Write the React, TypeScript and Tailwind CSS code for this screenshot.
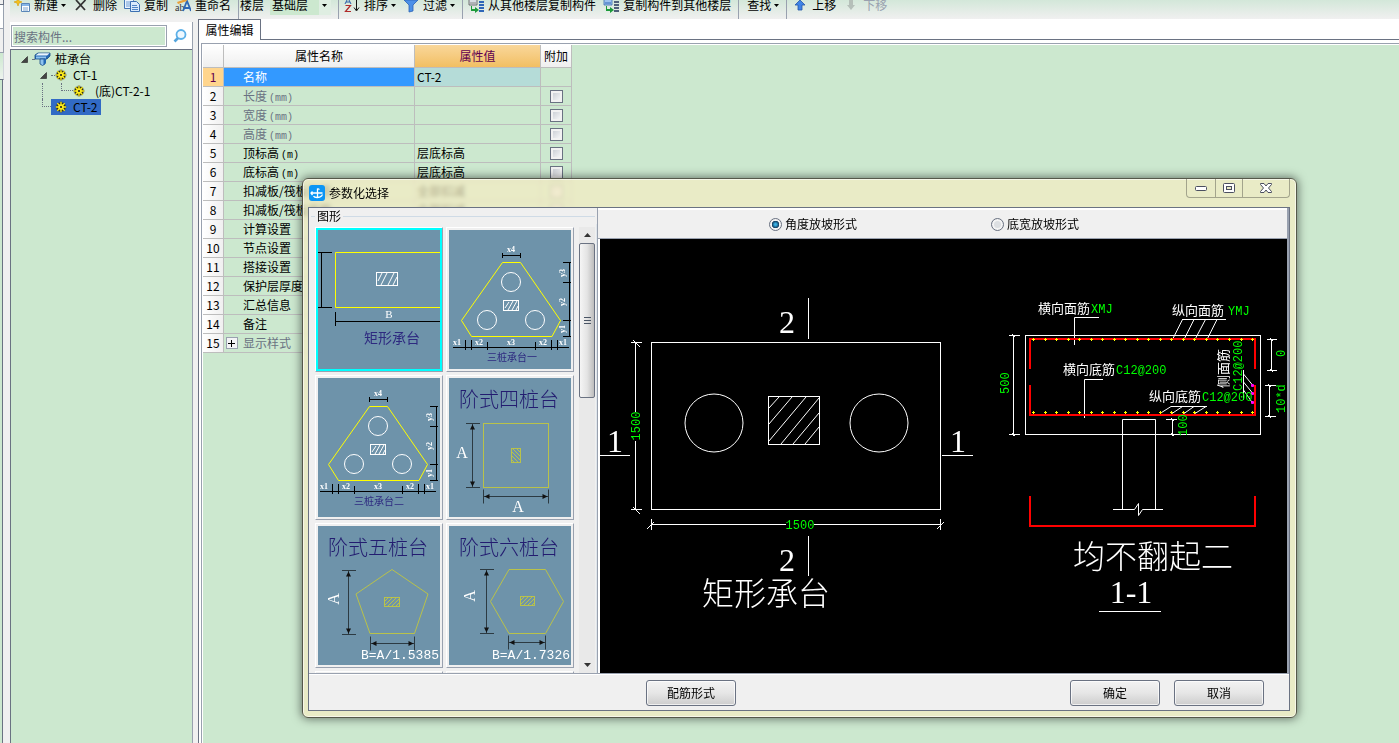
import type { ReactNode } from "react";

const UI_FONT = "font-['Noto_Sans_CJK_SC','Liberation_Sans',sans-serif]";
const MONO = "'Liberation Mono','Noto Sans CJK SC',monospace";
const SERIF = "'Liberation Serif','Noto Sans CJK SC',serif";
const CJK = "'Noto Sans CJK SC',sans-serif";

type Row = {
    name: string;
    unit?: string;
    value?: string;
    muted?: boolean;
    check?: boolean;
    expandable?: boolean;
};

const rows: Row[] = [
    { name: "名称", value: "CT-2" },
    { name: "长度", unit: "(mm)", muted: true, check: true },
    { name: "宽度", unit: "(mm)", muted: true, check: true },
    { name: "高度", unit: "(mm)", muted: true, check: true },
    { name: "顶标高", unit: "(m)", value: "层底标高", check: true },
    { name: "底标高", unit: "(m)", value: "层底标高", check: true },
    { name: "扣减板/筏板面筋", value: "全部扣减", check: true },
    { name: "扣减板/筏板底筋", value: "全部扣减", check: true },
    { name: "计算设置" },
    { name: "节点设置" },
    { name: "搭接设置" },
    { name: "保护层厚度" },
    { name: "汇总信息" },
    { name: "备注" },
    { name: "显示样式", muted: true, expandable: true },
];

/* ---------- Toolbar ---------- */

function Caret() {
    return (
        <svg width="5" height="3" viewBox="0 0 5 3" className="-ml-px shrink-0">
            <path d="M0 0h5L2.5 3z" fill="#000" />
        </svg>
    );
}

function ToolButton({ icon, label, caret, disabled }: { icon?: ReactNode; label: string; caret?: boolean; disabled?: boolean }) {
    return (
        <button type="button" disabled={disabled} className="flex h-7 shrink-0 items-center gap-1 whitespace-nowrap disabled:text-gray-400">
            {icon && (
                <svg width="16" height="16" viewBox="0 0 16 16" className="shrink-0">
                    {icon}
                </svg>
            )}
            {label}
            {caret && <Caret />}
        </button>
    );
}

const newIcon = (
    <>
        <path d="M4 1l1 3 3 1-3 1-1 3-1-3-3-1 3-1z" fill="#f5c21b" stroke="#d79a00" strokeWidth=".6" />
        <path d="M7.500 6.500h8v8h-8z" fill="#fff" stroke="#5a86b8" />
        <path d="M8 7h7v2H8z" fill="#86b6e8" />
        <path d="M9 11h5M9 13h5" stroke="#7ba3cf" />
    </>
);

const deleteIcon = <path d="M3 3l9 10M12.500 3L3 13" stroke="#333" strokeWidth="1.8" fill="none" />;

const copyIcon = (
    <>
        <path d="M.5 1.500h7l2 2v8h-9z" fill="#eaf3fd" stroke="#4477b5" />
        <path d="M2 5h5M2 7h4M2 9h4" stroke="#6f9ed4" />
        <path d="M6.500 4.500h6l3 3v7h-9z" fill="#d9eafb" stroke="#3c70b2" />
        <path d="M8 8.500h5M8 10.500h6M8 12.500h6" stroke="#4f84c4" />
    </>
);

const renameIcon = (
    <>
        <text x="0" y="14" fontSize="10" fontFamily={SERIF} fill="#333">ab</text>
        <path d="M8 14l4-10 4 10M9.500 11h5" stroke="#2f68b5" strokeWidth="1.8" fill="none" />
        <path d="M2 5l9-3 1 2-9 3z" fill="#e9a13b" />
    </>
);

const sortIcon = (
    <>
        <path d="M1 7l3-6 3 6M2 5h4" stroke="#2a5fa8" fill="none" />
        <path d="M1.500 8.500h5l-5 6h5.500" stroke="#b02a2a" strokeWidth="1.200" fill="none" />
        <path d="M12.500 1v12M10 10.500l2.500 3.500 2.500-3.500" stroke="#111" fill="none" />
    </>
);

const filterIcon = <path d="M1 3h14l-5 5v6l-4 1V8z" fill="#4a90e8" stroke="#2b62b5" strokeWidth=".8" />;

const floorIcon = (
    <>
        <path d="M1 2h8v6H1z" fill="#d8dde3" stroke="#555" strokeWidth=".8" />
        <path d="M2 6h6" stroke="#888" />
        <path d="M4 9v3h3v-2l4 3-4 3v-2H3V9z" fill="#1c9a3a" />
        <path d="M11 2h5M11 5h5M11 8h5M11 11h5M11 14h5" stroke="#2f66b8" strokeWidth="1.800" />
    </>
);

const floorToIcon = (
    <>
        <path d="M1 2h8v6H1z" fill="#9cc1ee" stroke="#3b6cae" strokeWidth=".8" />
        <path d="M2 6h6" stroke="#2f66b8" />
        <path d="M4 9v3h3v-2l4 3-4 3v-2H3V9z" fill="#1c9a3a" />
        <path d="M11 2h5M11 5h5M11 8h5M11 11h5M11 14h5" stroke="#50617a" strokeWidth="1.800" />
    </>
);

const upIcon = <path d="M8 3l5 5h-3v5H6V8H3z" fill="#3f83e6" stroke="#2356a8" strokeWidth=".8" />;
const downIcon = <path d="M8 13l4-5h-2V3H6v5H4z" fill="#b5bfb9" />;

function ToolGroup({ children, wide }: { children: ReactNode; wide?: boolean }) {
    return <div className={`flex h-7 items-center gap-[7px] border-l border-gray-400 ${wide ? "pl-2" : "pl-[5px]"}`}>{children}</div>;
}

function Toolbar() {
    return (
        <div className="flex h-[19px] shrink-0 items-end gap-[7px] overflow-hidden bg-linear-to-b from-[#d3e7d9] to-[#f0f0f0] pl-1">
            <ToolButton icon={newIcon} label="新建" caret />
            <ToolButton icon={deleteIcon} label="删除" />
            <ToolButton icon={copyIcon} label="复制" />
            <ToolButton icon={renameIcon} label="重命名" />
            <div className="flex h-7 shrink-0 items-center gap-[6px] border-l border-gray-400 pl-px">
                <label htmlFor="floor">楼层</label>
                <div className="relative h-5 w-[61px] bg-[#cce8cf]">
                    <select id="floor" className="h-5 w-full appearance-none pl-[2px] outline-none">
                        <option>基础层</option>
                    </select>
                    <span className="pointer-events-none absolute inset-y-0 right-0 flex w-3 items-center justify-center bg-[#dfeee2]">
                        <Caret />
                    </span>
                </div>
            </div>
            <ToolGroup>
                <ToolButton icon={sortIcon} label="排序" caret />
                <ToolButton icon={filterIcon} label="过滤" caret />
            </ToolGroup>
            <ToolGroup>
                <ToolButton icon={floorIcon} label="从其他楼层复制构件" />
                <ToolButton icon={floorToIcon} label="复制构件到其他楼层" />
            </ToolGroup>
            <ToolGroup wide>
                <ToolButton label="查找" caret />
            </ToolGroup>
            <ToolGroup>
                <ToolButton icon={upIcon} label="上移" />
                <ToolButton icon={downIcon} label="下移" disabled />
            </ToolGroup>
        </div>
    );
}

/* ---------- Component tree ---------- */

function Gear() {
    const spokes = "M6 .8v10.400M.8 6h10.400M2.300 2.300l7.400 7.400M9.700 2.300L2.300 9.700";
    return (
        <svg width="12" height="12" viewBox="0 0 12 12" className="shrink-0">
            <circle cx="6" cy="6" r="4.600" fill="#4a4200" />
            <path d={spokes} stroke="#222" strokeWidth="2.400" />
            <path d={spokes} stroke="#ffee1a" strokeWidth="1.400" />
            <circle cx="6" cy="6" r="2.800" fill="#ffee1a" />
            <circle cx="6" cy="6" r="1.100" fill="#222" />
        </svg>
    );
}

function Expander() {
    return (
        <svg width="7" height="7" viewBox="0 0 7 7" className="shrink-0">
            <path d="M6.500 .5v6h-6z" fill="#444" stroke="#222" strokeWidth=".6" />
        </svg>
    );
}

function TreePanel() {
    return (
        <aside className="flex w-[183px] shrink-0 flex-col border-r border-gray-400 bg-white">
            <div className="flex h-[27px] items-center pl-px pt-px">
                <input
                    type="text"
                    aria-label="搜索构件"
                    placeholder="搜索构件..."
                    className="h-[22px] w-[156px] border border-gray-400 bg-[#cce8cf] px-[2px] outline-none ring-1 ring-inset ring-white placeholder:text-gray-500"
                />
                <button type="button" aria-label="搜索" className="ml-[6px]">
                    <svg width="14" height="14" viewBox="0 0 14 14">
                        <circle cx="8" cy="5.500" r="4.500" fill="#eef8ff" stroke="#5cb0e8" strokeWidth="1.800" />
                        <path d="M5 9l-3.500 3.500" stroke="#53a4dc" strokeWidth="2.600" />
                    </svg>
                </button>
            </div>
            <ul className="flex-1 border-l border-t border-gray-500 bg-[#cce8cf] pt-px leading-4">
                <li className="flex h-4 items-center pl-[10px]">
                    <Expander />
                    <span className="ml-1 w-[2px] border-t border-dotted border-gray-500" />
                    <svg width="17" height="14" viewBox="0 0 17 14" className="shrink-0">
                        <path d="M1 3l3-2h12v3l-3 3H1z" fill="#2468b4" stroke="#174d86" strokeWidth=".8" />
                        <path d="M1.500 3.500h11.500l2.500-2.200H4.500z" fill="#eaf5fd" />
                        <path d="M2 4.500h10v2H2z" fill="#8fc3ee" />
                        <path d="M6 7h5v5l-2.500 1.500L6 12z" fill="#8fc3ee" stroke="#174d86" strokeWidth=".8" />
                        <path d="M9.500 7H12v4l-2.500 2z" fill="#2468b4" />
                    </svg>
                    <span className="ml-1">桩承台</span>
                </li>
                <li className="flex h-4 items-center pl-[29px]">
                    <Expander />
                    <span className="ml-1 w-1 border-t border-dotted border-gray-500" />
                    <Gear />
                    <span className="ml-[6px]">CT-1</span>
                </li>
                <li className="flex h-4 items-center pl-[31px]">
                    <span className="h-4 w-[19px] border-l border-dotted border-gray-500" />
                    <span className="h-2 w-3 self-start border-b border-l border-dotted border-gray-500" />
                    <Gear />
                    <span className="ml-[10px]">(底)CT-2-1</span>
                </li>
                <li className="flex h-4 items-center pl-[31px]">
                    <span className="h-2 w-[9px] self-start border-b border-l border-dotted border-gray-500" />
                    <span className="flex h-4 items-center bg-[#316ac5] pl-1 pr-1">
                        <Gear />
                        <span className="ml-[6px]">CT-2</span>
                    </span>
                </li>
            </ul>
        </aside>
    );
}

/* ---------- Property table ---------- */

const CELL = "h-[19px] border-b border-r border-[#bdbdbd] p-0 leading-4 whitespace-nowrap overflow-hidden";

function PropertyTable() {
    return (
        <table className="w-[369px] table-fixed border-separate border-spacing-0 text-left font-normal">
            <colgroup>
                <col className="w-[21px]" />
                <col className="w-[191px]" />
                <col className="w-[126px]" />
                <col className="w-[31px]" />
            </colgroup>
            <thead>
                <tr className="h-[23px] text-center">
                    <th className="border-b border-r border-[#bdbdbd] bg-linear-to-b from-white to-[#efefef] p-0" />
                    <th className="border-b border-r border-[#bdbdbd] bg-linear-to-b from-white to-[#efefef] p-0 font-normal">属性名称</th>
                    <th className="border-b border-r border-[#bdbdbd] bg-linear-to-b from-[#f9d79a] to-[#f2bf62] p-0 font-normal text-[#5f0050]">属性值</th>
                    <th className="border-b border-r border-[#bdbdbd] bg-linear-to-b from-white to-[#efefef] p-0 font-normal whitespace-nowrap">附加</th>
                </tr>
            </thead>
            <tbody>
                {rows.map((row, i) => (
                    <tr key={i} className={row.muted ? "text-gray-500" : "text-black"}>
                        <td className={`${CELL} text-center ${i === 0 ? "bg-[#ffd58d] text-[#5f0050]" : "bg-linear-to-r from-white to-[#f0f0f0] text-black"}`}>
                            {i + 1}
                        </td>
                        <td className={`${CELL} ${i === 0 ? "bg-[#3399ff] text-white" : ""}`}>
                            <span className="flex items-center">
                                <span className="flex w-[19px] justify-center">
                                    {row.expandable && (
                                        <span className="mr-1 flex size-3 items-center justify-center border border-gray-400 bg-gray-100">
                                            <svg width="7" height="7" viewBox="0 0 7 7">
                                                <path d="M3.500 0v7M0 3.500h7" stroke="#000" />
                                            </svg>
                                        </span>
                                    )}
                                </span>
                                <span className="flex items-baseline">
                                    {row.name}
                                    {row.unit && <span className="pl-[2px] font-['Liberation_Mono',monospace] text-[10px] leading-none">{row.unit}</span>}
                                </span>
                            </span>
                        </td>
                        <td className={`${CELL} pl-[2px] ${i === 0 ? "bg-[#b5dcd8]" : ""}`}>{row.value}</td>
                        <td className={CELL}>
                            {row.check && (
                                <input
                                    type="checkbox"
                                    aria-label={row.name}
                                    className="mx-auto block size-[13px] appearance-none border border-gray-500 bg-linear-to-br from-[#c3c8cf] to-white ring-2 ring-inset ring-[#f2f2f2]"
                                />
                            )}
                        </td>
                    </tr>
                ))}
            </tbody>
        </table>
    );
}

/* ---------- Thumbnails ---------- */

function Hatch({ x, y, w, h, color, flip }: { x: number; y: number; w: number; h: number; color: string; flip?: boolean }) {
    const step = 4;
    const lines: string[] = [];
    for (let s = step; s < w + h; s += step) {
        const x1 = Math.min(s, w);
        const y1 = s - x1;
        const y2 = Math.min(s, h);
        const x2 = s - y2;
        lines.push(flip ? `M${x + w - x1} ${y + y1}L${x + w - x2} ${y + y2}` : `M${x + x1} ${y + y1}L${x + x2} ${y + y2}`);
    }
    return (
        <g stroke={color} fill="none">
            <rect x={x} y={y} width={w} height={h} />
            <path d={lines.join("")} />
        </g>
    );
}

function TriplePile({ title }: { title: string }) {
    return (
        <>
            <path d="M53.500 32.500h18l40 58-8.500 16H22.500l-10-16z" stroke="#ff0" fill="none" />
            <g stroke="#fff" fill="none">
                <circle cx="62" cy="52" r="9.500" />
                <circle cx="38" cy="90" r="9.500" />
                <circle cx="86" cy="90" r="9.500" />
            </g>
            <g stroke="#fff" fill="none">
                <rect x="54.500" y="70.500" width="15" height="10" />
                <path d="M56 78l4-6M59 80l5-9M63 80l5-9M67 80l2-4" />
            </g>
            <path
                d="M53.500 25.500h18M53.500 23v5M71.500 23v5M120.500 32v75M114 32.500h8M114 52.500h8M114 90.500h8M114 106.500h8M4 117.500h116M16.500 110v10M22.500 110v10M38.500 112v8M86.500 112v8M102.500 110v10M108.500 110v10"
                stroke="#000"
                fill="none"
            />
            <g fill="#fff" fontFamily={SERIF} fontSize="8" fontWeight="bold" textAnchor="middle">
                <text x="62" y="22">x4</text>
                <text x="8" y="115">x1</text>
                <text x="30" y="115">x2</text>
                <text x="62" y="115">x3</text>
                <text x="94" y="115">x2</text>
                <text x="114" y="115">x1</text>
                <text transform="translate(116 43) rotate(-90)">y3</text>
                <text transform="translate(116 72) rotate(-90)">y2</text>
                <text transform="translate(116 99) rotate(-90)">y1</text>
            </g>
            <text x="38" y="131" fontSize="10" fontFamily={CJK} fill="#2e2a80">{title}</text>
        </>
    );
}

function StepTitle({ children }: { children: string }) {
    return <text x="10" y="29" fontSize="20" fontWeight="300" fontFamily={CJK} fill="#231c70">{children}</text>;
}

/* Vertical and horizontal dimension lines with filled arrow heads */
function VDim({ x, y1, y2 }: { x: number; y1: number; y2: number }) {
    return (
        <g stroke="#2c3a42" fill="#111">
            <path d={`M${x} ${y1}V${y2}M${x - 6.5} ${y1}h14M${x - 6.5} ${y2}h14`} />
            <path d={`M${x} ${y1 + 1}l2.500 5h-5zM${x} ${y2 - 1}l2.500-5h-5z`} stroke="none" />
        </g>
    );
}

function HDim({ y, x1, x2 }: { y: number; x1: number; x2: number }) {
    return (
        <g stroke="#2c3a42" fill="#111">
            <path d={`M${x1} ${y}H${x2}M${x1} ${y - 7}v14M${x2} ${y - 7}v14`} />
            <path d={`M${x1 + 1} ${y}l5 2.500v-5zM${x2 - 1} ${y}l-5 2.500v-5z`} stroke="none" />
        </g>
    );
}

const OLIVE = "#b9c24a";

const thumbs: { title: string; art: ReactNode }[] = [
    {
        title: "矩形承台",
        art: (
            <>
                <path d="M122 22.500H17.500v55H122" stroke="#ff0" fill="none" />
                <path d="M0 22.500h14M0 77.500h14M3.500 22.500v55M17.500 82v14M17.500 91.500H122" stroke="#000" fill="none" />
                <rect x="58.500" y="42.500" width="21" height="13" stroke="#fff" fill="none" />
                <path d="M60 51l4-8M63 55l6-12M70 55l6-12M75 55l4-8" stroke="#fff" fill="none" />
                <text x="71" y="88" textAnchor="middle" fontSize="11" fontFamily={SERIF} fill="#fff">B</text>
                <text x="46" y="113" fontSize="14" fontFamily={CJK} fill="#2e2a80">矩形承台</text>
            </>
        ),
    },
    { title: "三桩承台一", art: <TriplePile title="三桩承台一" /> },
    {
        title: "三桩承台二",
        art: (
            <g transform="translate(-2 -4)">
                <TriplePile title="三桩承台二" />
            </g>
        ),
    },
    {
        title: "阶式四桩台",
        art: (
            <>
                <StepTitle>阶式四桩台</StepTitle>
                <rect x="34.500" y="45.500" width="65" height="64" stroke={OLIVE} fill="none" />
                <Hatch x={62.5} y={70.5} w={9} h={14} color={OLIVE} flip />
                <VDim x={23.5} y1={45.5} y2={109.5} />
                <HDim y={118.5} x1={34.5} x2={99.5} />
                <g fill="#fff" fontFamily={SERIF} fontSize="16" textAnchor="middle">
                    <text x="13" y="80">A</text>
                    <text x="69" y="134">A</text>
                </g>
            </>
        ),
    },
    {
        title: "阶式五桩台",
        art: (
            <>
                <StepTitle>阶式五桩台</StepTitle>
                <path d="M74 43.500l36 24.500-13.500 39.500H52L38 68z" stroke={OLIVE} fill="none" />
                <Hatch x={66.5} y={71.5} w={15} h={9} color={OLIVE} />
                <VDim x={30.5} y1={44.5} y2={108.5} />
                <HDim y={117.5} x1={52.5} x2={96.5} />
                <text transform="translate(21 73) rotate(-90)" textAnchor="middle" fontSize="16" fontFamily={SERIF} fill="#fff">A</text>
                <text x="121" y="133" textAnchor="end" fontSize="13" fontFamily={MONO} fill="#fff">B=A/1.5385</text>
            </>
        ),
    },
    {
        title: "阶式六桩台",
        art: (
            <>
                <StepTitle>阶式六桩台</StepTitle>
                <path d="M60 43.500h36.500l18 32-18 32H60l-18.500-32z" stroke={OLIVE} fill="none" />
                <Hatch x={71.5} y={70.5} w={14} h={9} color={OLIVE} />
                <VDim x={37.5} y1={43.5} y2={107.5} />
                <HDim y={116.5} x1={59.5} x2={96.5} />
                <text transform="translate(26 70) rotate(-90)" textAnchor="middle" fontSize="16" fontFamily={SERIF} fill="#fff">A</text>
                <text x="121" y="133" textAnchor="end" fontSize="13" fontFamily={MONO} fill="#fff">B=A/1.7326</text>
            </>
        ),
    },
    { title: "七桩台", art: null },
    { title: "八桩台", art: null },
];

function ShapeList() {
    return (
        <div className="flex w-[288px] shrink-0 flex-col overflow-hidden">
            <div className="flex h-4 shrink-0 items-center gap-[2px] pl-[2px] pr-[2px] leading-4">
                <span className="w-1 border-t border-[#cfdbe6]" />
                <span>图形</span>
                <span className="flex-1 border-t border-[#cfdbe6]" />
            </div>
            <div className="flex min-h-0 flex-1 border-r border-[#dfe6ec] pr-px pt-[3px]">
                <div className="grid flex-1 grid-cols-[128px_128px] content-start gap-[3px] overflow-hidden pl-[6px]">
                    {thumbs.map((t, i) => (
                        <button
                            key={t.title}
                            type="button"
                            aria-label={t.title}
                            className={`h-[145px] border border-b-gray-400 border-l-white border-r-gray-400 border-t-white p-[2px] ${i === 0 ? "bg-[#00ffff]" : "bg-[#f0f0f0]"}`}
                        >
                            <svg width="122" height="139" viewBox="0 0 122 139" className="block bg-[#6e93aa]">
                                {t.art}
                            </svg>
                        </button>
                    ))}
                </div>
                <div className="flex w-4 shrink-0 flex-col items-center bg-[#e9e9e9]">
                    <button type="button" aria-label="向上滚动" className="flex h-4 w-full shrink-0 items-center justify-center">
                        <svg width="7" height="4" viewBox="0 0 7 4"><path d="M3.500 0L7 4H0z" fill="#333" /></svg>
                    </button>
                    <div className="flex h-[155px] w-full shrink-0 flex-col items-center justify-center gap-[2px] rounded-[2px] border border-gray-500 bg-linear-to-r from-[#f5f5f5] via-[#e4e4e4] to-[#bdbdbd]">
                        <span className="w-[7px] border-t border-gray-600" />
                        <span className="w-[7px] border-t border-gray-600" />
                        <span className="w-[7px] border-t border-gray-600" />
                    </div>
                    <button type="button" aria-label="向下滚动" className="mt-auto flex h-4 w-full shrink-0 items-center justify-center">
                        <svg width="7" height="4" viewBox="0 0 7 4"><path d="M0 0h7L3.500 4z" fill="#333" /></svg>
                    </button>
                </div>
            </div>
        </div>
    );
}

/* ---------- CAD drawing ---------- */

const bars = Array.from({ length: 20 }, (_, i) => Math.round(1033 + i * 11.53) + 0.5);

function Plan() {
    return (
        <>
            <g stroke="#fff" fill="none">
                <rect x="651.500" y="342.500" width="289" height="167" />
                <circle cx="714" cy="423" r="29" />
                <circle cx="879" cy="423" r="29" />
                <rect x="768.500" y="396.500" width="51" height="48" />
                <path d="M769 408l10-11M769 424l23-27M769 441l37-44M781 444l38-46M793 444l26-31M805 444l14-17" />
                <path d="M635.500 342v70M635.500 441v69M631 342.500h11M631 509.500h11M633 340l7 7M633 507l7 7" />
                <path d="M651 524.500h135M814 524.500h127M651.500 519v11M940.500 519v11M647 529l7-7M937 529l7-7" />
                <path d="M600 455.500h30M942 455.500h31M808.500 298v41M808.500 536v40" />
            </g>
            <g fill="#fff" fontFamily={SERIF} fontSize="32" textAnchor="middle">
                <text x="787" y="333">2</text>
                <text x="787" y="571">2</text>
                <text x="615" y="452">1</text>
                <text x="958" y="452">1</text>
            </g>
            <g fill="#0f0" fontFamily={MONO} fontSize="12" textAnchor="middle">
                <text x="800" y="529">1500</text>
                <text transform="translate(640 426) rotate(-90)">1500</text>
            </g>
            <text x="702" y="605" fill="#fff" fontFamily={CJK} fontWeight="300" fontSize="32">矩形承台</text>
        </>
    );
}

function Section() {
    return (
        <>
            <g stroke="#fff" fill="none">
                <rect x="1025.500" y="335.500" width="235" height="99" />
                <path d="M1013.500 335v101M1009 335.500h11M1009 434.500h11M1012 334l3 3M1012 433l3 3" />
                <path d="M1099 317.500h-24.500V345M1103 379.500h-18.500V418" />
                <path d="M1182 319.500h44M1182.500 319.500l-10 20M1194 319.500l-10 20M1205.500 319.500l-10.500 20M1217 319.500l-10 20" />
                <path d="M1171 406.500h36M1171 406.500l-11 7M1182.500 406.500l-10.500 7M1194 406.500l-10 7M1206 406.500l-11 7" />
                <path d="M1243.500 370v30M1243.500 374l9 11M1243.500 382l9 11M1243.500 390l9 13" />
                <path d="M1271.500 339v32M1267 339.500h10M1267 370.500h10M1269.500 385v32M1265 385.500h11M1265 416.500h11" />
                <path d="M1270 338l3 3M1270 369l3 3M1268 384l3 3M1268 415l3 3" />
                <path d="M1172.500 419v17M1166 419.500h11M1171 418l3 3M1171 433l3 3" />
                <path d="M1122.500 509.500v-90h33v90" />
                <path d="M1113 509.500h21.500l4-6v12l4-6H1163" />
                <path d="M1099 611.500h62" />
            </g>
            <g stroke="#f00" strokeWidth="2" fill="none">
                <path d="M1030 369v-30h225v30M1030 385v30h225v-30M1030 496v30h225v-30" />
            </g>
            <g stroke="#ff0">
                {bars.map((x) => (
                    <path key={x} d={`M${x - 1.5} 339.500h3M${x} 338v3M${x - 1.5} 412.500h3M${x} 411v3`} />
                ))}
            </g>
            <path d="M1251 385.500h3M1252.500 384v3M1251 393.500h3M1252.500 392v3M1251 402.500h3M1252.500 401v3" stroke="#f0f" strokeWidth="2" />
            <g fill="#fff" fontFamily={CJK} fontSize="13">
                <text x="1038" y="313">横向面筋</text>
                <text x="1172" y="315">纵向面筋</text>
                <text x="1063" y="374">横向底筋</text>
                <text x="1149" y="401">纵向底筋</text>
                <text transform="translate(1228 388) rotate(-90)">侧面筋</text>
            </g>
            <g fill="#0f0" fontFamily={MONO} fontSize="12">
                <text x="1091" y="313">XMJ</text>
                <text x="1228" y="315">YMJ</text>
                <text x="1116" y="374">C12@200</text>
                <text x="1202" y="401">C12@200</text>
                <text transform="translate(1242 391) rotate(-90)">C12@200</text>
                <text transform="translate(1009 394) rotate(-90)">500</text>
                <text transform="translate(1187 436) rotate(-90)">100</text>
                <text transform="translate(1285 357) rotate(-90)">0</text>
                <text transform="translate(1285 413) rotate(-90)">10*d</text>
            </g>
            <text x="1073" y="568" fill="#fff" fontFamily={CJK} fontWeight="300" fontSize="32">均不翻起二</text>
            <text x="1131" y="603" fill="#fff" fontFamily={SERIF} fontSize="32" textAnchor="middle">1-1</text>
        </>
    );
}

/* ---------- Dialog ---------- */

const BUTTON = "h-[26px] w-[90px] rounded-[3px] border border-gray-500 bg-linear-to-b from-[#f3f3f3] via-[#e6e6e6] to-[#cdcdcd] ring-1 ring-inset ring-white/70";
const RADIO = "size-[13px] appearance-none rounded-full border border-gray-500 bg-[#dcdfe2] ring-2 ring-inset ring-[#f4f4f4] checked:bg-[radial-gradient(circle,#3bb4e8_10%,#103a5c_45%,#f4f4f4_50%)] checked:ring-0";

function ParamDialog() {
    return (
        <div
            role="dialog"
            aria-label="参数化选择"
            className="absolute left-[302px] top-[178px] flex h-[540px] w-[995px] flex-col rounded-[6px] border border-[#55584a] bg-[#f5ecc2]/70 pb-[6px] pl-[5px] pr-[6px] shadow-[0_0_10px_1px_rgba(0,0,0,0.5)] ring-1 ring-inset ring-white/60 backdrop-blur-[2px]"
        >
            <div className="flex h-7 shrink-0 items-start justify-between">
                <div className="flex h-7 items-center gap-1 pl-px">
                    <svg width="16" height="16" viewBox="0 0 16 16">
                        <rect width="16" height="16" rx="3" fill="#0b95f5" />
                        <path d="M2.500 8h11M8.500 3.500V12M8.500 3.500l2 1M3.500 6.500L2 8l1.500 2M4.500 11c1 2 6 2 8 0l1-1.500" stroke="#fff" strokeWidth="1.300" fill="none" />
                    </svg>
                    <span>参数化选择</span>
                </div>
                <div className="flex h-[19px] rounded-b-[4px] border border-t-0 border-[#a3a48c]">
                    <button type="button" aria-label="最小化" className="flex w-7 items-center justify-center">
                        <svg width="12" height="5" viewBox="0 0 12 5"><rect x=".5" y=".5" width="11" height="4" rx="1" fill="#fff" stroke="#4b4f60" /></svg>
                    </button>
                    <button type="button" aria-label="最大化" className="flex w-7 items-center justify-center border-x border-[#a3a48c]">
                        <svg width="12" height="10" viewBox="0 0 12 10">
                            <rect x=".5" y=".5" width="11" height="9" rx="1" fill="#fff" stroke="#4b4f60" />
                            <rect x="3.500" y="3.500" width="5" height="3" fill="#e9e9c5" stroke="#4b4f60" />
                        </svg>
                    </button>
                    <button type="button" aria-label="关闭" className="flex w-[46px] items-center justify-center">
                        <svg width="12" height="10" viewBox="0 0 12 10">
                            <path d="M.5 .5h3.500L6 3 8 .5h3.500v1L8.500 5l3 3.500v1H8L6 7 4 9.500H.5v-1L3.500 5l-3-3.500z" fill="#fff" stroke="#4b4f60" />
                        </svg>
                    </button>
                </div>
            </div>
            <div className="flex min-h-0 flex-1 flex-col border border-gray-500 bg-[#f0f0f0]">
                <div className="flex min-h-0 flex-1 border-b border-gray-400">
                    <ShapeList />
                    <div className="flex min-w-0 flex-1 flex-col border-l border-r-2 border-gray-400">
                        <div
                            role="radiogroup"
                            aria-label="放坡形式"
                            className="flex h-[31px] shrink-0 items-center gap-[134px] border-b border-b-gray-400 border-t-2 border-t-white pl-[171px]"
                        >
                            <label className="flex items-center gap-[3px]">
                                <input type="radio" name="slope" defaultChecked className={RADIO} />
                                角度放坡形式
                            </label>
                            <label className="flex items-center gap-[3px]">
                                <input type="radio" name="slope" className={RADIO} />
                                底宽放坡形式
                            </label>
                        </div>
                        <div className="min-h-0 flex-1 overflow-hidden border-l-2 border-white bg-black">
                            <svg width="687" height="433" viewBox="600 239 687 433" className="block">
                                <Plan />
                                <Section />
                            </svg>
                        </div>
                    </div>
                </div>
                <div className="flex h-9 shrink-0 items-center justify-between border-t border-white pl-[337px] pr-[25px]">
                    <button type="button" className={BUTTON}>配筋形式</button>
                    <div className="flex gap-[14px]">
                        <button type="button" className={BUTTON}>确定</button>
                        <button type="button" className={BUTTON}>取消</button>
                    </div>
                </div>
            </div>
        </div>
    );
}

export default function App() {
    return (
        <div className={`relative flex h-screen overflow-hidden bg-[#f0f0f0] text-xs text-black ${UI_FONT}`}>
            {/* Docked navigation edge */}
            <div className="flex w-[10px] shrink-0 flex-col">
                <div className="h-[5px] w-1 border-b border-r border-gray-500" />
                <div className="h-6 w-1 border-b border-r border-gray-400 bg-white" />
                <div className="h-6 w-1 border-b border-r border-gray-400" />
                <div className="h-[27px] w-1 border-b border-r border-b-gray-500 border-r-gray-300 bg-linear-to-b from-[#cce8cf] to-[#eef3ee]" />
                <div className="w-[3px] flex-1 border-r border-gray-500 bg-[#cce8cf]" />
            </div>
            <div className="flex min-w-0 flex-1 flex-col">
                <Toolbar />
                <div className="flex min-h-0 flex-1 gap-[5px]">
                    <div className="flex pt-[3px]">
                        <TreePanel />
                    </div>
                    <main className="flex min-w-0 flex-1 flex-col border-l border-gray-500 bg-white">
                        <div className="flex h-[21px] shrink-0">
                            <button type="button" className="w-[62px] border-r border-t border-gray-500 bg-white">属性编辑</button>
                            <div className="flex-1 border-b border-gray-500" />
                        </div>
                        <div className="ml-[2px] mt-[3px] flex-1 border-l border-t border-gray-400 bg-white pl-px pt-px">
                            <div className="h-full bg-[#cce8cf]">
                                <PropertyTable />
                            </div>
                        </div>
                    </main>
                </div>
            </div>
            <ParamDialog />
        </div>
    );
}
